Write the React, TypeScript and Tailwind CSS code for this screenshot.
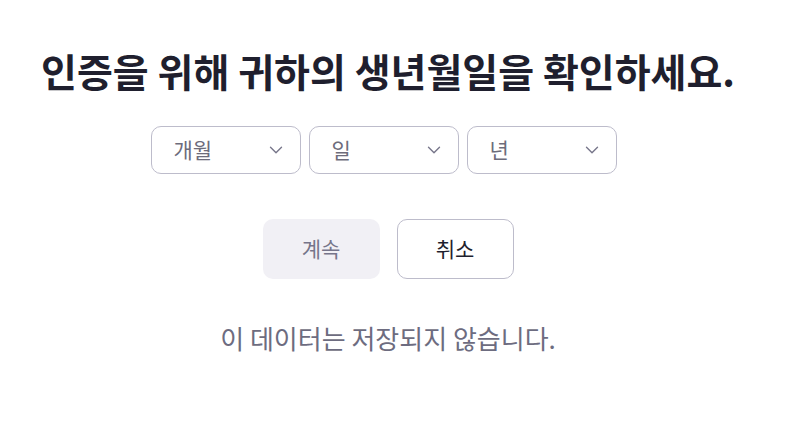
import { ChevronDown } from 'lucide-react'

const selects = ['개월', '일', '년']

export default function App() {
  return (
    <div
      className="w-[776px] h-[427px] bg-white flex flex-col items-center"
      style={{ fontFamily: '"Noto Sans CJK KR", "Noto Sans", sans-serif' }}
    >
      <h1 className="mt-[44px] text-[39px] font-bold leading-[52px] text-[#1f1f2e]">
        인증을 위해 귀하의 생년월일을 확인하세요.
      </h1>

      {/* date selects */}
      <div className="mt-[30px] mr-[9px] flex gap-[8px]">
        {selects.map((label) => (
          <div
            key={label}
            className="w-[150px] h-[48px] rounded-[10px] border border-[#bdbccb] flex items-center justify-between pl-[22px] pr-[13px]"
          >
            <span className="text-[21px] text-[#6d6c7b]">{label}</span>
            <ChevronDown className="w-[22px] h-[22px] text-[#77768a]" strokeWidth={1.5} />
          </div>
        ))}
      </div>

      {/* actions */}
      <div className="mt-[45px] flex gap-[17px]">
        <button className="w-[117px] h-[60px] rounded-[10px] bg-[#f1f0f5] text-[21px] text-[#76758a]">
          계속
        </button>
        <button className="w-[117px] h-[60px] rounded-[10px] border border-[#bdbccb] bg-white text-[21px] text-[#1f1f2e]">
          취소
        </button>
      </div>

      <p className="mt-[41px] text-[26px] leading-[36px] text-[#6d6c80]">이 데이터는 저장되지 않습니다.</p>
    </div>
  )
}
